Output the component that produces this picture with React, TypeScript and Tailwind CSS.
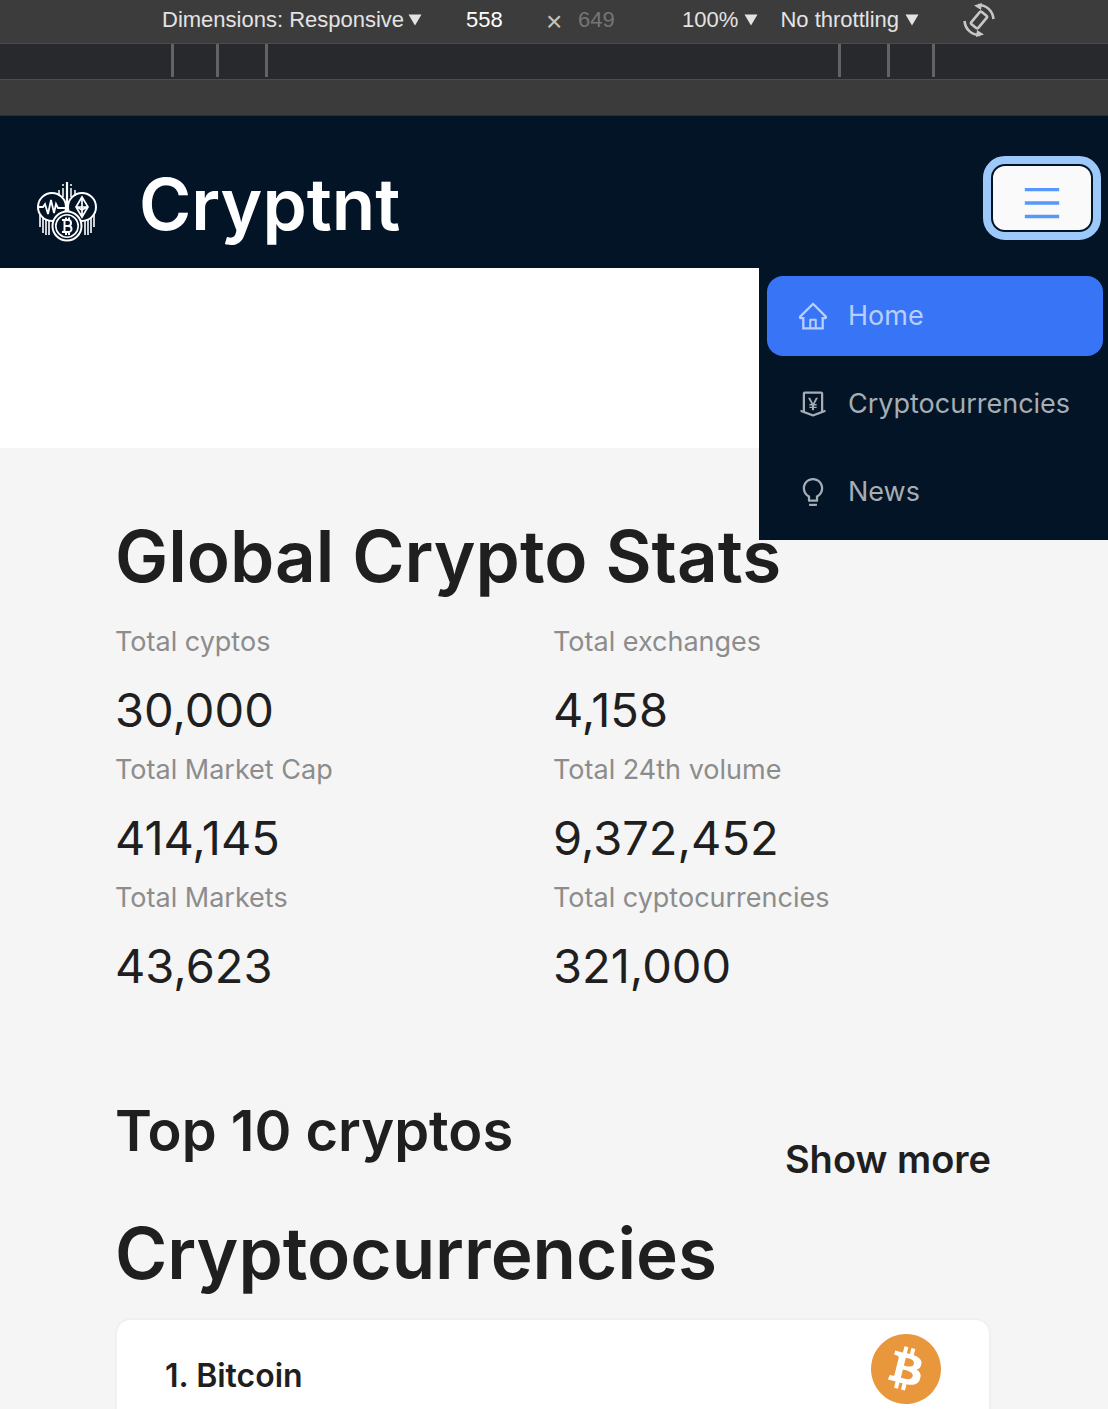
import { AiOutlineHome, AiOutlineMoneyCollect, AiOutlineBulb, AiOutlineMenu } from "react-icons/ai";
import { SiBitcoin } from "react-icons/si";

const stats = [
  ["Total cyptos", "30,000"],
  ["Total exchanges", "4,158"],
  ["Total Market Cap", "414,145"],
  ["Total 24th volume", "9,372,452"],
  ["Total Markets", "43,623"],
  ["Total cyptocurrencies", "321,000"],
];

const links = [
  { label: "Home", Icon: AiOutlineHome, active: true },
  { label: "Cryptocurrencies", Icon: AiOutlineMoneyCollect, active: false },
  { label: "News", Icon: AiOutlineBulb, active: false },
];

function Caret() {
  return (
    <svg viewBox="0 0 14 12" className="h-3 w-3.5" fill="currentColor" aria-hidden="true">
      <path d="M0.5 0.5h13L7 11.5z" />
    </svg>
  );
}

function Logo() {
  return (
    <svg viewBox="0 0 60 60" className="size-[60px]" fill="none" stroke="#fff" strokeWidth="2" aria-hidden="true">
      <path d="M30 0v31" strokeWidth="2.2" />
      <path d="M26 2v2M34 2v2M26 6v9M34 6v9M22 8v6M38 8v6" strokeWidth="1.5" />
      <circle cx="15" cy="25" r="14" />
      <circle cx="45" cy="25" r="14" />
      <path d="M2 25h4l2-3 3 10 3-14 3 13 2-9 2 4h8" strokeWidth="1.8" />
      <path d="M45 15l6 10-6 10-6-10zM45 15v20M39 25h12M40 25l5 3 5-3" strokeWidth="1.7" />
      <path d="M3 33v12M6 36v15M9 38v15M12 39v14M57 33v12M54 36v15M51 38v15M48 39v14" strokeWidth="1.6" />
      <circle cx="30" cy="44" r="14.5" fill="#021426" />
      <circle cx="30" cy="44" r="11.2" strokeWidth="1.6" />
      <path d="M27.500 38v12M25 38h6a3 3 0 0 1 0 6h-3.500h4a3 3 0 0 1 0 6H25M29 35.500v2.500M32 35.500v2.500M29 50v3M32 50v3" strokeWidth="2" />
    </svg>
  );
}

function RotateIcon() {
  return (
    <svg viewBox="0 0 32 34" className="h-[34px] w-8" fill="none" stroke="currentColor" strokeWidth="2.600" aria-hidden="true">
      <rect x="11.500" y="9" width="9" height="16" rx="1.500" transform="rotate(40 16 17)" />
      <path d="M15 2c8 0 14.500 5 15.500 14M17 32c-8 0-14.500-5-15.500-14" />
      <path d="M11 2.500L19 0l-1 7zM21 31.500L13 34l1-7z" fill="currentColor" stroke="none" />
    </svg>
  );
}

function Tick() {
  return <span className="h-[33px] w-[3px] bg-[#636365]" />;
}

export default function App() {
  return (
    <div className="flex min-h-screen flex-col bg-white font-['Inter',sans-serif] text-[#1f1f1f]">
      <div className="flex h-11 items-center border-b border-[#4a4c50] bg-[#3c3c3c] pb-1 pl-[162px] font-['Liberation_Sans',sans-serif] text-[22px] leading-8 text-[#e3e3e3]">
        <button className="flex items-center gap-1">
          Dimensions: Responsive <Caret />
        </button>
        <input aria-label="Width" defaultValue="558" className="ml-9 w-20 bg-transparent px-2 text-white" />
        <span className="w-8 pt-1 text-center text-[28px] text-[#c4c4c4]">×</span>
        <input aria-label="Height" defaultValue="649" className="w-24 bg-transparent px-2 text-[#757575]" />
        <button className="ml-4 flex items-center gap-1.5">
          100% <Caret />
        </button>
        <button className="ml-[22px] flex items-center gap-1.5">
          No throttling <Caret />
        </button>
        <button aria-label="Rotate" className="ml-11 text-[#c7c7c7]">
          <RotateIcon />
        </button>
      </div>
      <div className="flex h-9 justify-center gap-[570px] border-b border-[#4a4c50] bg-[#28292d] pr-0.5">
        <div className="flex">
          <Tick />
          <span className="w-[42px]" />
          <Tick />
          <span className="w-[46px]" />
          <Tick />
        </div>
        <div className="flex">
          <Tick />
          <span className="w-[46px]" />
          <Tick />
          <span className="w-[42px]" />
          <Tick />
        </div>
      </div>
      <div className="h-9 border-b border-[#2b2b2b] bg-[#3b3b3b]" />

      <header className="relative flex h-[152px] items-start bg-[#021426] pl-[37px] text-white">
        <div className="mt-[66px]"><Logo /></div>
        <h1 className="mt-[42px] ml-[42px] text-[71px] leading-[92px] font-semibold">Cryptnt</h1>
        <button
          aria-label="Menu"
          className="mt-[50px] mr-[17px] ml-auto flex h-16 w-[98px] items-center justify-center rounded-xl bg-[#fafafa] pt-2.5 text-[#5897fb] outline-8 outline-offset-2 outline-[#9cc8fa]"
        >
          <AiOutlineMenu size={44} />
        </button>
        <nav className="absolute top-full right-0 z-10 flex w-[349px] flex-col gap-2 bg-[#021426] py-2 pr-[5px] pl-2">
          {links.map(({ label, Icon, active }) => (
            <a
              key={label}
              href="#"
              className={
                active
                  ? "flex h-20 items-center gap-[19px] rounded-2xl bg-[#3875f6] pl-[30px] text-[27px] text-[#b9cffb]"
                  : "flex h-20 items-center gap-[19px] rounded-2xl pl-[30px] text-[27px] text-[#a6adb4]"
              }
            >
              <Icon size={32} />
              {label}
            </a>
          ))}
        </nav>
      </header>

      <main className="mt-[180px] flex grow flex-col bg-[#f5f5f5] pt-[62px] pr-[117px] pl-[115px]">
        <h2 className="text-[71px] leading-[92px] font-semibold">Global Crypto Stats</h2>
        <dl className="mt-[18px] grid grid-cols-2">
          {stats.map(([label, value]) => (
            <div key={label}>
              <dt className="text-[27px] leading-[44px] text-[#8c8c8c]">{label}</dt>
              <dd className="pt-2 text-[47px] leading-[76px]">{value}</dd>
            </div>
          ))}
        </dl>
        <div className="mt-[91px] flex justify-between">
          <h2 className="text-[56px] leading-[72px] font-semibold">Top 10 cryptos</h2>
          <a href="#" className="mt-10 text-[38px] leading-[48px] font-semibold">Show more</a>
        </div>
        <h2 className="mt-6 text-[71px] leading-[92px] font-semibold">Cryptocurrencies</h2>
        <article className="mt-[19px] min-h-[90px] grow rounded-t-2xl border-2 border-b-0 border-[#f0f0f0] bg-white px-12">
          <div className="flex items-start justify-between pt-3.5">
            <h3 className="mt-[17px] text-[32px] leading-[50px] font-semibold">1. Bitcoin</h3>
            <SiBitcoin size={70} color="#e8973d" />
          </div>
        </article>
      </main>
    </div>
  );
}
